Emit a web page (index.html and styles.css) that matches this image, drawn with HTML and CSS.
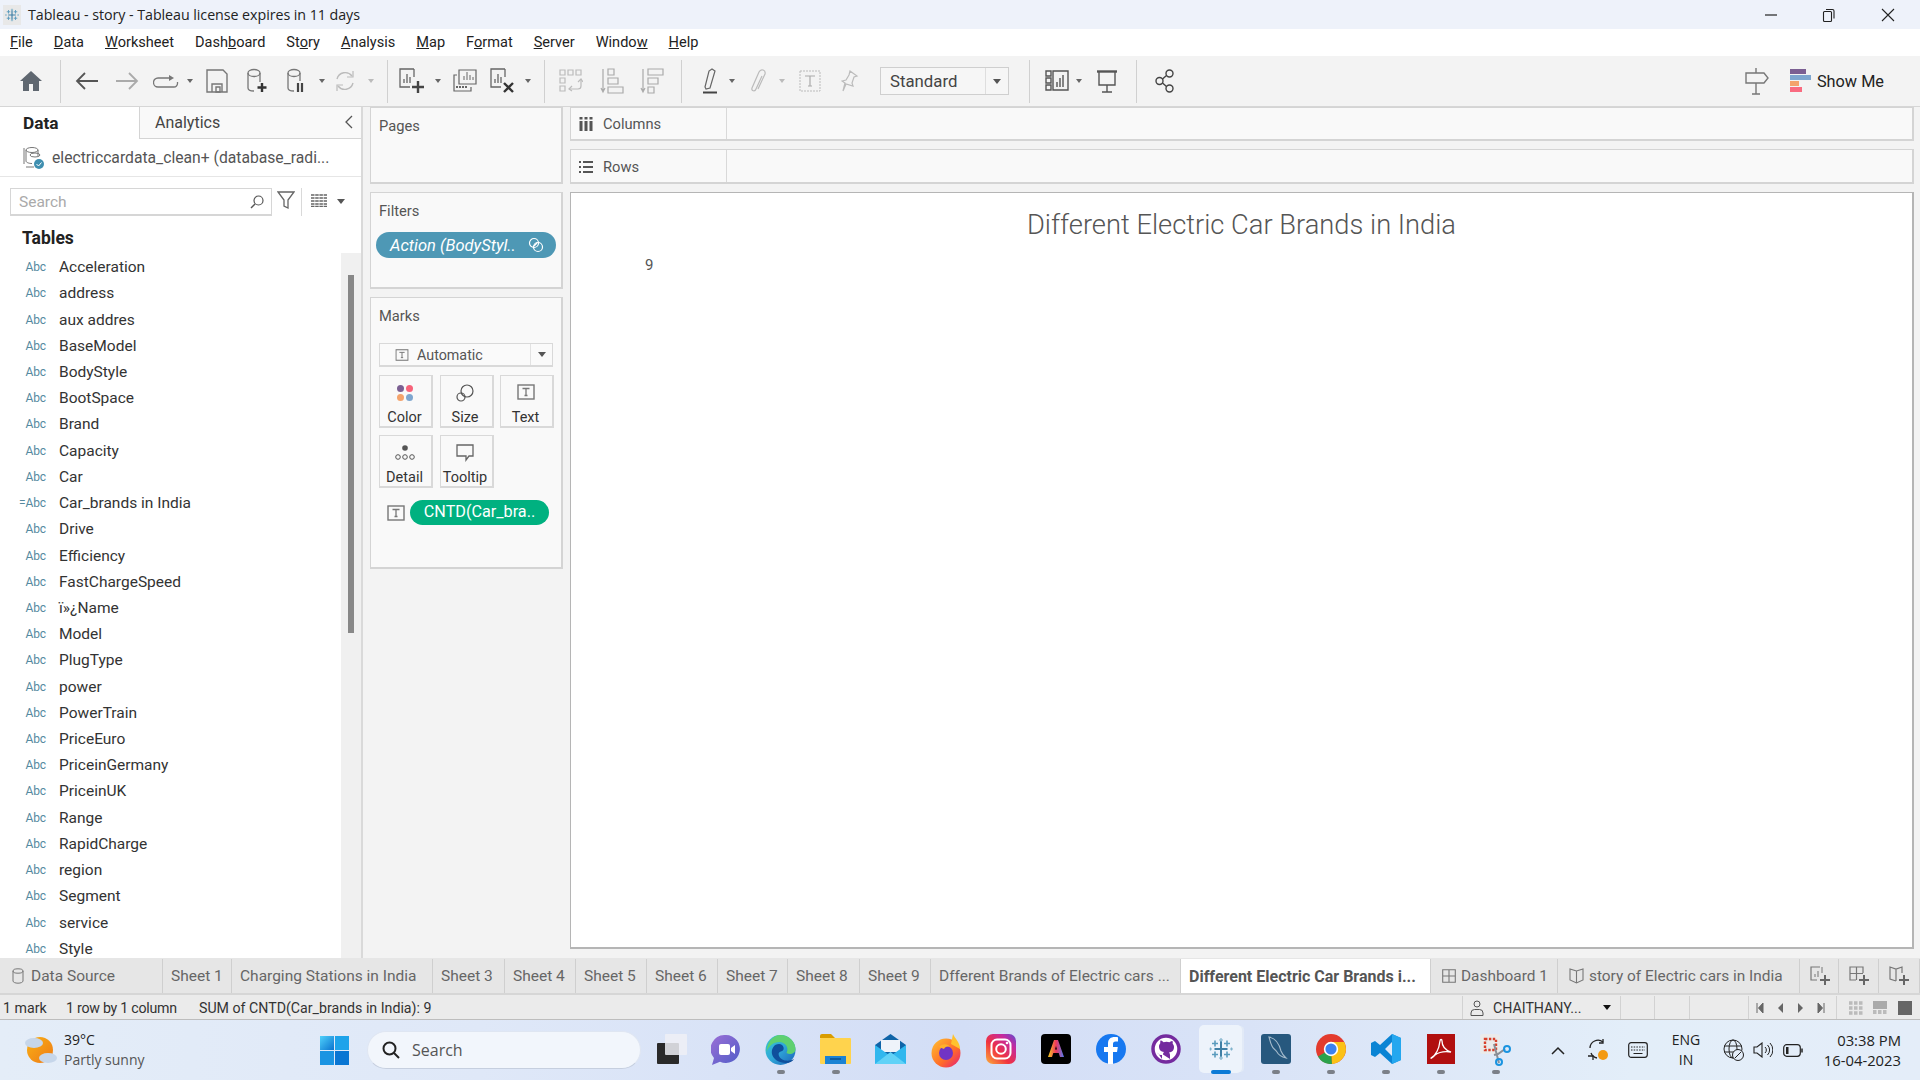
FILE: index.html
```html
<!DOCTYPE html>
<html lang="en">
<head>
<meta charset="utf-8">
<title>Tableau - story</title>
<link rel="stylesheet" href="styles.css">
</head>
<body>
<svg class="defs" width="0" height="0">
  <symbol id="tab-logo" viewBox="0 0 24 24">
    <g stroke="#4e86a8" stroke-width="1.6" fill="none">
      <path d="M12 4v16M5.5 12h13" stroke-width="2" stroke="#3f7fa5"/>
      <path d="M6 3.5v6M3 6.5h6M18 3.5v6M15 6.5h6M6 14.500v6M3 17.500h6M18 14.500v6M15 17.500h6" stroke="#5a9bbd"/>
      <path d="M12 1v4M10 3h4M12 19v4M10 21h4M1.500 10.500v3M.5 12h2.500M22.500 10.500v3M21 12h3" stroke="#7fb2cc" stroke-width="1.200"/>
    </g>
  </symbol>
  <symbol id="i-t" viewBox="0 0 18 16">
    <rect x="1" y="1" width="16" height="14" fill="none" stroke="#777" stroke-width="1.400"/>
    <path d="M5.500 4.500h7M9 4.500v7M7.500 11.500h3" stroke="#777" stroke-width="1.300" fill="none"/>
  </symbol>
  <symbol id="i-chart" viewBox="0 0 22 22">
    <path d="M15 1H1v18h10" fill="none" stroke="#666" stroke-width="1.300"/>
    <path d="M15 1v8" fill="none" stroke="#666" stroke-width="1.300"/>
    <path d="M5 15v-4M8 15V6M11 15V9" stroke="#666" stroke-width="1.300"/>
  </symbol>
</svg>

<header class="titlebar">
  <svg class="app-tile" width="18" height="20" viewBox="0 0 18 20"><rect width="18" height="20" fill="#e8e8e8"/><use href="#tab-logo" x="2" y="3" width="14" height="14"/></svg>
  <span class="title-text">Tableau - story - Tableau license expires in 11 days</span>
  <div class="win-controls">
    <svg width="14" height="14" viewBox="0 0 14 14"><path d="M1 7h12" stroke="#222" stroke-width="1.200"/></svg>
    <svg width="14" height="16" viewBox="0 0 14 16"><path d="M1.500 5.500a1 1 0 0 1 1-1h6a1 1 0 0 1 1 1v8a1 1 0 0 1-1 1h-6a1 1 0 0 1-1-1zM4 2.500h6.500a1.500 1.500 0 0 1 1.500 1.500v7.500" fill="none" stroke="#222" stroke-width="1.100"/></svg>
    <svg width="14" height="14" viewBox="0 0 14 14"><path d="M1 1l12 12M13 1L1 13" stroke="#222" stroke-width="1.100"/></svg>
  </div>
</header>

<nav class="menubar">
  <span><u>F</u>ile</span><span><u>D</u>ata</span><span><u>W</u>orksheet</span><span>Dash<u>b</u>oard</span><span>St<u>o</u>ry</span><span><u>A</u>nalysis</span><span><u>M</u>ap</span><span>F<u>o</u>rmat</span><span><u>S</u>erver</span><span>Windo<u>w</u></span><span><u>H</u>elp</span>
</nav>

<div class="toolbar">
  <div class="tool w40 first"><svg width="24" height="22" viewBox="0 0 24 22"><path d="M12 1L1 11h3v10h6v-7h4v7h6V11h3z" fill="#5f6770"/></svg></div>
  <div class="tool w18"><i class="vsep"></i></div>
  <div class="tool w36"><svg width="24" height="20" viewBox="0 0 24 20"><path d="M23 10H2M10 2l-8 8 8 8" fill="none" stroke="#555" stroke-width="1.800"/></svg></div>
  <div class="tool w44"><svg width="24" height="20" viewBox="0 0 24 20"><path d="M1 10h21M14 2l8 8-8 8" fill="none" stroke="#aaa" stroke-width="1.800"/></svg></div>
  <div class="tool w34"><svg width="26" height="14" viewBox="0 0 26 14"><path d="M17 4H5a3.500 3.500 0 0 0 0 9h16a3.500 3.500 0 0 0 3.500-3.500V8" fill="none" stroke="#777" stroke-width="1.300"/><path d="M16 1l5 3-5 3z" fill="#777"/></svg></div>
  <div class="tool w14"><i class="dd"></i></div>
  <div class="tool w40"><svg width="22" height="24" viewBox="0 0 22 24"><path d="M1 1h16l4 4v18H1z" fill="none" stroke="#777" stroke-width="1.400"/><path d="M6 23v-8h10v8M10 18h4v5h-4z" fill="none" stroke="#777" stroke-width="1.400"/></svg></div>
  <div class="tool w40"><svg width="22" height="26" viewBox="0 0 22 26"><ellipse cx="8" cy="5" rx="6" ry="3.500" fill="none" stroke="#777" stroke-width="1.300"/><path d="M2 5v15c0 2 2 3 6 3M14 5v9" fill="none" stroke="#777" stroke-width="1.300"/><path d="M16 15v9M11.500 19.500h9" stroke="#333" stroke-width="2.400"/></svg></div>
  <div class="tool w38"><svg width="20" height="26" viewBox="0 0 20 26"><ellipse cx="8" cy="5" rx="6" ry="3.500" fill="none" stroke="#777" stroke-width="1.300"/><path d="M2 5v15c0 2 2 3 6 3M14 5v8" fill="none" stroke="#777" stroke-width="1.300"/><path d="M12 15v9M16 15v9" stroke="#444" stroke-width="2.200"/></svg></div>
  <div class="tool w13"><i class="dd"></i></div>
  <div class="tool w34"><svg width="22" height="22" viewBox="0 0 22 22"><path d="M3 9a8.500 8.500 0 0 1 15-3M19 13a8.500 8.500 0 0 1-15 3" fill="none" stroke="#bbb" stroke-width="1.400"/><path d="M19 1v6h-6M3 21v-6h6" fill="none" stroke="#bbb" stroke-width="1.200"/></svg></div>
  <div class="tool w18"><i class="dd off"></i></div>
  <div class="tool w14"><i class="vsep"></i></div>
  <div class="tool w36"><svg width="26" height="26" viewBox="0 0 26 26"><use href="#i-chart" width="22" height="22"/><path d="M19 13v12M13 19h12" stroke="#444" stroke-width="2.400"/></svg></div>
  <div class="tool w16"><i class="dd"></i></div>
  <div class="tool w38"><svg width="24" height="24" viewBox="0 0 24 24"><path d="M6 1h17v14H6z" fill="none" stroke="#666" stroke-width="1.200"/><path d="M11 11V7M14 11V3M17 11V6M20 11V8" stroke="#666"/><path d="M4 6H1v16h17v-4" fill="none" stroke="#666" stroke-width="1.200"/><path d="M3 18h12" stroke="#666" stroke-width="2" stroke-dasharray="2 1"/></svg></div>
  <div class="tool w38"><svg width="26" height="26" viewBox="0 0 26 26"><use href="#i-chart" width="22" height="22"/><path d="M14 15l9 9M23 15l-9 9" stroke="#333" stroke-width="2.400"/></svg></div>
  <div class="tool w12"><i class="dd"></i></div>
  <div class="tool w20"><i class="vsep"></i></div>
  <div class="tool w34"><svg width="24" height="24" viewBox="0 0 24 24"><g fill="none" stroke="#bbb" stroke-width="1.200"><path d="M1 1h5v5H1zM9 1h5v5H9zM17 1h5v5h-5zM1 9h5v5H1zM1 17h5v5H1zM10 20h9a3 3 0 0 0 3-3v-6"/><path d="M19 13l3-3 2 3M13 17l-3 3 3 2"/></g></svg></div>
  <div class="tool w48"><svg width="24" height="26" viewBox="0 0 24 26"><g fill="none" stroke="#aaa" stroke-width="1.200"><path d="M3 1v22M1 20l2 4 2-4M8 1h6v6H8zM8 10h10v6H8zM8 19h15v6H8z"/></g></svg></div>
  <div class="tool w32"><svg width="24" height="26" viewBox="0 0 24 26"><g fill="none" stroke="#aaa" stroke-width="1.200"><path d="M3 1v22M1 20l2 4 2-4M8 1h15v6H8zM8 10h10v6H8zM8 19h6v6H8z"/></g></svg></div>
  <div class="tool w26"><i class="vsep"></i></div>
  <div class="tool w32"><svg width="16" height="26" viewBox="0 0 16 26"><path d="M3 19L7 3l3-2 3 2-5 17-4 1z" fill="none" stroke="#666" stroke-width="1.200"/><path d="M1 24.500h14" stroke="#444" stroke-width="2"/></svg></div>
  <div class="tool w12"><i class="dd"></i></div>
  <div class="tool w40"><svg width="16" height="26" viewBox="0 0 16 26"><path d="M12 8L6 21c-1 3-5 2-4-1L9 4c2-4 7-2 6 2L8 21" fill="none" stroke="#bbb" stroke-width="1.200"/></svg></div>
  <div class="tool w8"><i class="dd off"></i></div>
  <div class="tool w48"><svg width="22" height="22" viewBox="0 0 22 22"><rect x="1" y="1" width="20" height="20" fill="none" stroke="#bbb" stroke-dasharray="2 1"/><path d="M6 6h10M11 6v10M9 16h4" fill="none" stroke="#aaa" stroke-width="1.200"/></svg></div>
  <div class="tool w32"><svg width="18" height="24" viewBox="0 0 18 24"><path d="M9 2l7 5-3 1-2 6 1 3-7-2-3 7 2-8-3-2 4-1 3-5z" fill="none" stroke="#bbb" stroke-width="1.200"/></svg></div>
  <div class="std-select"><span class="std-label">Standard</span><span class="std-arrow"><i class="dd dark"></i></span></div>
  <div class="tool w30"><i class="vsep"></i></div>
  <div class="tool w26"><svg width="24" height="22" viewBox="0 0 24 22"><g fill="none" stroke="#555" stroke-width="1.400"><path d="M1 1h5v5H1zM1 8h5v5H1zM1 15h5v5H1zM8 1h15v19H8z"/><path d="M12 17v-5M15 17V8M18 17V5"/></g></svg></div>
  <div class="tool w18"><i class="dd"></i></div>
  <div class="tool w38"><svg width="22" height="24" viewBox="0 0 22 24"><path d="M1 2.500h20" stroke="#555" stroke-width="2.400"/><path d="M3 3v13h16V3M11 16v7M6 23h10" fill="none" stroke="#555" stroke-width="1.400"/></svg></div>
  <div class="tool w20"><i class="vsep"></i></div>
  <div class="tool w38"><svg width="20" height="24" viewBox="0 0 20 24"><g fill="none" stroke="#444" stroke-width="1.400"><circle cx="4.500" cy="12" r="3.500"/><circle cx="14.500" cy="4.500" r="3.500"/><circle cx="14.500" cy="19.500" r="3.500"/><path d="M7.500 10l4-3.500M7.500 14l4 3.500"/></g></svg></div>
  <div class="toolbar-right">
    <svg width="24" height="28" viewBox="0 0 24 28"><path d="M1 6h18l4 5-4 5H1zM11 16v11M7 27h8M11 1v5" fill="none" stroke="#777" stroke-width="1.400"/></svg>
    <div class="showme"><svg width="21" height="24" viewBox="0 0 21 24"><rect width="16" height="5" fill="#7b5f92"/><rect y="6" width="21" height="5" fill="#7ea6cf"/><rect y="12" width="9" height="5" fill="#f4a36c"/><rect y="18" width="12" height="5" fill="#f96b80"/></svg><span>Show Me</span></div>
  </div>
</div>

<main class="workspace">
  <aside class="data-pane">
    <div class="pane-tabs">
      <div class="pane-tab active">Data</div>
      <div class="pane-tab">Analytics<svg class="collapse" width="8" height="14" viewBox="0 0 8 14"><path d="M7 1L1 7l6 6" fill="none" stroke="#555" stroke-width="1.300"/></svg></div>
    </div>
    <div class="source-row">
      <svg width="22" height="24" viewBox="0 0 22 24"><g fill="none" stroke="#777"><ellipse cx="9" cy="4" rx="6" ry="2.500"/><path d="M3 4v11c0 1.500 3 2.500 6 2.500M15 4v6M1 2v16M3 21h8"/><ellipse cx="12" cy="9" rx="5" ry="2"/></g><circle cx="16" cy="18" r="5" fill="#3f8fb0"/><path d="M13.500 18l2 2 3-3.500" stroke="#fff" fill="none"/></svg>
      <span>electriccardata_clean+ (database_radi...</span>
    </div>
    <div class="search-row">
      <div class="search-box"><span>Search</span><svg width="14" height="14" viewBox="0 0 14 14"><circle cx="8.500" cy="5.500" r="4.500" fill="none" stroke="#555" stroke-width="1.200"/><path d="M5 9l-4 4" stroke="#555" stroke-width="1.400"/></svg></div>
      <svg class="funnel" width="18" height="20" viewBox="0 0 18 20"><path d="M1 2h16l-6 8v8l-4-2v-6z" fill="none" stroke="#666" stroke-width="1.300"/></svg>
      <i class="search-sep"></i>
      <svg class="listview" width="16" height="13" viewBox="0 0 16 13"><path d="M0 1h16M0 4h16M0 7h16M0 10h16M0 12.500h16" stroke="#666" stroke-width="1.500" stroke-dasharray="3.500 .7"/></svg>
      <i class="dd dark search-dd"></i>
    </div>
    <h2 class="tables-head">Tables</h2>
    <div class="field-area">
      <ul class="fields">
        <li><b>Abc</b>Acceleration</li>
        <li><b>Abc</b>address</li>
        <li><b>Abc</b>aux addres</li>
        <li><b>Abc</b>BaseModel</li>
        <li><b>Abc</b>BodyStyle</li>
        <li><b>Abc</b>BootSpace</li>
        <li><b>Abc</b>Brand</li>
        <li><b>Abc</b>Capacity</li>
        <li><b>Abc</b>Car</li>
        <li><b>=Abc</b>Car_brands in India</li>
        <li><b>Abc</b>Drive</li>
        <li><b>Abc</b>Efficiency</li>
        <li><b>Abc</b>FastChargeSpeed</li>
        <li><b>Abc</b>ï»¿Name</li>
        <li><b>Abc</b>Model</li>
        <li><b>Abc</b>PlugType</li>
        <li><b>Abc</b>power</li>
        <li><b>Abc</b>PowerTrain</li>
        <li><b>Abc</b>PriceEuro</li>
        <li><b>Abc</b>PriceinGermany</li>
        <li><b>Abc</b>PriceinUK</li>
        <li><b>Abc</b>Range</li>
        <li><b>Abc</b>RapidCharge</li>
        <li><b>Abc</b>region</li>
        <li><b>Abc</b>Segment</li>
        <li><b>Abc</b>service</li>
        <li><b>Abc</b>Style</li>
      </ul>
      <div class="scroll-track"><div class="scroll-thumb"></div></div>
    </div>
  </aside>

  <section class="cards">
    <div class="card pages"><div class="card-label">Pages</div></div>
    <div class="card filters">
      <div class="card-label">Filters</div>
      <div class="pill-filter"><span>Action (BodyStyl..</span><svg width="16" height="16" viewBox="0 0 16 16"><g fill="none" stroke="#fff" stroke-width="1.200"><circle cx="6" cy="6" r="4.500"/><circle cx="10" cy="10" r="4.500"/><path d="M6 9l3-3"/></g></svg></div>
    </div>
    <div class="card marks">
      <div class="card-label">Marks</div>
      <div class="marks-select"><div class="marks-type"><svg width="14" height="12" viewBox="0 0 18 16"><use href="#i-t" width="18" height="16"/></svg><span>Automatic</span></div><span class="marks-arrow"><i class="dd dark"></i></span></div>
      <div class="mark-grid">
        <div class="mark-btn"><svg width="18" height="18" viewBox="0 0 18 18"><circle cx="4.500" cy="4.500" r="3.500" fill="#7b5f92"/><circle cx="13.500" cy="4.500" r="3.500" fill="#f7637a"/><circle cx="4.500" cy="13.500" r="3.500" fill="#f4a36c"/><circle cx="13.500" cy="13.500" r="3.500" fill="#7ea6cf"/></svg><span>Color</span></div>
        <div class="mark-btn"><svg width="18" height="18" viewBox="0 0 18 18"><g fill="none" stroke="#555" stroke-width="1.200"><circle cx="11" cy="7" r="6"/><circle cx="5" cy="13" r="4"/></g></svg><span>Size</span></div>
        <div class="mark-btn"><svg width="18" height="16" viewBox="0 0 18 16"><use href="#i-t" width="18" height="16"/></svg><span>Text</span></div>
        <div class="mark-btn"><svg width="20" height="18" viewBox="0 0 20 18"><circle cx="10" cy="4" r="2.800" fill="#555"/><g fill="none" stroke="#555"><circle cx="3" cy="13" r="2.300"/><circle cx="10" cy="13" r="2.300"/><circle cx="17" cy="13" r="2.300"/></g></svg><span>Detail</span></div>
        <div class="mark-btn"><svg width="18" height="18" viewBox="0 0 18 18"><path d="M1 1h16v11h-4l-3 4v-4H1z" fill="none" stroke="#666" stroke-width="1.300"/></svg><span>Tooltip</span></div>
      </div>
      <div class="mark-pill-row"><svg width="18" height="16" viewBox="0 0 18 16"><use href="#i-t" width="18" height="16"/></svg><div class="pill-measure">CNTD(Car_bra..</div></div>
    </div>
  </section>

  <section class="canvas">
    <div class="shelf"><div class="shelf-label"><svg width="14" height="14" viewBox="0 0 14 14"><path d="M2 4v10M7 4v10M12 4v10" stroke="#555" stroke-width="3"/><path d="M2 0v2.500M7 0v2.500M12 0v2.500" stroke="#555" stroke-width="3"/></svg><span>Columns</span></div></div>
    <div class="shelf"><div class="shelf-label"><svg width="14" height="14" viewBox="0 0 14 14"><path d="M0 2h2M4 2h10M0 7h2M4 7h10M0 12h2M4 12h10" stroke="#555" stroke-width="2"/></svg><span>Rows</span></div></div>
    <div class="view">
      <h1 class="view-title">Different Electric Car Brands in India</h1>
      <div class="view-value">9</div>
    </div>
  </section>
</main>

<div class="tabs">
  <div class="tab src"><svg width="12" height="16" viewBox="0 0 12 16"><ellipse cx="6" cy="3" rx="5" ry="2.200" fill="none" stroke="#777"/><path d="M1 3v10c0 1.200 2.200 2.200 5 2.200s5-1 5-2.200V3" fill="none" stroke="#777"/></svg>Data Source</div>
  <div class="tab">Sheet 1</div>
  <div class="tab">Charging Stations in India</div>
  <div class="tab">Sheet 3</div>
  <div class="tab">Sheet 4</div>
  <div class="tab">Sheet 5</div>
  <div class="tab">Sheet 6</div>
  <div class="tab">Sheet 7</div>
  <div class="tab">Sheet 8</div>
  <div class="tab">Sheet 9</div>
  <div class="tab">Dfferent Brands of Electric cars ...</div>
  <div class="tab current">Different Electric Car Brands i...</div>
  <div class="tab icon-tab"><svg width="14" height="14" viewBox="0 0 14 14"><path d="M.7.7h12.600v12.600H.7zM7 .7v12.600M.7 7h12.600" fill="none" stroke="#777" stroke-width="1.100"/></svg>Dashboard 1</div>
  <div class="tab icon-tab"><svg width="15" height="16" viewBox="0 0 15 16"><path d="M7.500 3L1 1v11l6.500 3 6.500-3V1zM7.500 3v12" fill="none" stroke="#777" stroke-width="1.100"/></svg>story of Electric cars in India</div>
  <div class="tab add"><svg width="20" height="20" viewBox="0 0 20 20"><path d="M10 1H1v13h6" fill="none" stroke="#777" stroke-width="1.200"/><path d="M12 1v6M5 11V8M8 11V5" stroke="#777"/><path d="M15 9v10M10 14h10" stroke="#666" stroke-width="2"/></svg></div>
  <div class="tab add"><svg width="20" height="20" viewBox="0 0 20 20"><path d="M7 14H1V1h13v6M7.500 1v13M1 7.500h13" fill="none" stroke="#777" stroke-width="1.200"/><path d="M15 9v10M10 14h10" stroke="#666" stroke-width="2"/></svg></div>
  <div class="tab add"><svg width="20" height="20" viewBox="0 0 20 20"><path d="M7 15L1 13V1l6 2 6-2v6M7 3v12" fill="none" stroke="#777" stroke-width="1.200"/><path d="M15 9v10M10 14h10" stroke="#666" stroke-width="2"/></svg></div>
</div>

<div class="status">
  <span class="st-a">1 mark</span><span class="st-b">1 row by 1 column</span><span class="st-c">SUM of CNTD(Car_brands in India): 9</span>
  <div class="st-user"><svg width="14" height="16" viewBox="0 0 14 16"><circle cx="7" cy="4" r="3" fill="none" stroke="#555"/><path d="M1 15.500v-2.500a3.500 3.500 0 0 1 3.500-3.500h5A3.500 3.500 0 0 1 13 13v2.500z" fill="none" stroke="#555"/></svg><span>CHAITHANY...</span><i class="dd black"></i></div>
  <div class="st-cell w34"></div><div class="st-cell w35"></div><div class="st-cell w59"></div>
  <div class="st-nav">
    <svg width="8" height="10" viewBox="0 0 8 10"><path d="M1 0v10M7 0v10L2.500 5z" stroke="#666" fill="#666"/></svg>
    <svg width="6" height="10" viewBox="0 0 6 10"><path d="M5 0v10L0 5z" fill="#666"/></svg>
    <svg width="6" height="10" viewBox="0 0 6 10"><path d="M1 0v10l5-5z" fill="#666"/></svg>
    <svg width="8" height="10" viewBox="0 0 8 10"><path d="M7 0v10M1 0v10L5.500 5z" stroke="#666" fill="#666"/></svg>
  </div>
  <div class="st-views">
    <svg width="14" height="14" viewBox="0 0 14 14"><path d="M0 2h14M0 7h14M0 12h14" stroke="#bbb" stroke-width="3.500" stroke-dasharray="3.500 1.500"/></svg>
    <svg width="14" height="14" viewBox="0 0 14 14"><rect width="14" height="8" fill="#aaa"/><path d="M0 11h14" stroke="#bbb" stroke-width="4" stroke-dasharray="3.500 1.500"/></svg>
    <svg width="14" height="14" viewBox="0 0 14 14"><rect width="14" height="14" fill="#666"/></svg>
  </div>
</div>

<footer class="taskbar">
  <div class="weather">
    <svg width="32" height="32" viewBox="0 0 32 32"><defs><linearGradient id="sun" x1="0" y1="0" x2="1" y2="1"><stop offset="0" stop-color="#f9b115"/><stop offset="1" stop-color="#ee7a17"/></linearGradient></defs><circle cx="15" cy="16" r="13" fill="url(#sun)"/><ellipse cx="9" cy="9" rx="9" ry="5" fill="#c6d6ea"/><ellipse cx="23" cy="24" rx="9" ry="5" fill="#c6d6ea"/></svg>
    <div class="weather-text"><span class="temp">39°C</span><span class="sky">Partly sunny</span></div>
  </div>
  <svg class="winlogo" width="29" height="29" viewBox="0 0 29 29"><defs><linearGradient id="w1" x1="0" y1="0" x2="1" y2="1"><stop offset="0" stop-color="#4fd1fb"/><stop offset="1" stop-color="#0a73cf"/></linearGradient></defs><rect width="14" height="14" fill="url(#w1)"/><rect x="15" width="14" height="14" fill="#1ea3ea"/><rect y="15" width="14" height="14" fill="#1b94e2"/><rect x="15" y="15" width="14" height="14" fill="#0a76d3"/></svg>
  <div class="task-search"><svg width="18" height="18" viewBox="0 0 18 18"><circle cx="7.500" cy="7.500" r="6" fill="none" stroke="#222" stroke-width="2"/><path d="M12 12l5 5" stroke="#222" stroke-width="2"/></svg><span>Search</span></div>
  <div class="apps">
    <div class="app first"><svg width="30" height="30" viewBox="0 0 30 30"><rect y="9" width="22" height="21" rx="1" fill="#2a2a2a"/><rect x="8" width="22" height="21" rx="1" fill="#eef0f6" opacity=".85"/></svg></div>
    <div class="app"><svg width="30" height="32" viewBox="0 0 30 32"><defs><linearGradient id="chat" x1="0" y1="0" x2="1" y2="1"><stop offset="0" stop-color="#9c6fd6"/><stop offset="1" stop-color="#4f5dc8"/></linearGradient></defs><path d="M15 1a14 14 0 1 1-6 26.700L1 31l2-7A14 14 0 0 1 15 1z" fill="url(#chat)"/><rect x="8" y="10" width="11" height="11" rx="2" fill="#fff"/><path d="M20 14l4-3v9l-4-3z" fill="#fff"/></svg></div>
    <div class="app dot"><svg width="31" height="32" viewBox="0 0 31 32"><defs><linearGradient id="edge" x1="0" y1="0" x2="1" y2="1"><stop offset="0" stop-color="#37c6d0"/><stop offset=".5" stop-color="#2fa7d8"/><stop offset="1" stop-color="#1b5fb8"/></linearGradient></defs><circle cx="15.500" cy="16" r="15" fill="url(#edge)"/><path d="M15.500 1A15 15 0 0 1 30.500 15c0 5-6 6-9 4 3-6-2-11-7-11-6 0-11 4-13 10C2 8 8 1 15.500 1z" fill="#5ed070"/><path d="M14 10c-5 0-8 5-7 10s7 9 14 9c4 0 7-2 8-4-5 3-13 2-15-3-1-3 0-4 3-5 3-1 2-7-3-7z" fill="#0f4f9c"/></svg></div>
    <div class="app dot"><svg width="31" height="30" viewBox="0 0 31 30"><path d="M0 2a2 2 0 0 1 2-2h9l4 4H0z" fill="#d99c00"/><rect y="4" width="31" height="26" rx="1" fill="#ffd34d"/><rect x="5" y="22" width="21" height="8" fill="#1b83d4"/><path d="M10 25h11" stroke="#0c4f8d" stroke-width="1.500"/></svg></div>
    <div class="app"><svg width="31" height="30" viewBox="0 0 31 30"><path d="M15.500 0L31 11v19H0V11z" fill="#0f64a8"/><path d="M6 6h19v12H6z" fill="#eef3fa"/><path d="M0 11l15.500 11L31 11v19H0z" fill="#30b7ee"/><path d="M0 30l15.500-12L31 30z" fill="#61d2f7"/></svg></div>
    <div class="app"><svg width="30" height="34" viewBox="0 0 30 34"><defs><linearGradient id="fx" x1="0" y1="0" x2="1" y2="1"><stop offset="0" stop-color="#ffc22e"/><stop offset=".6" stop-color="#ff6a2a"/><stop offset="1" stop-color="#e3197d"/></linearGradient></defs><circle cx="15" cy="19" r="14.500" fill="url(#fx)"/><path d="M22 0c2 5 7 8 7 15L20 10z" fill="#ffc22e"/><circle cx="15" cy="19" r="7" fill="#7134c4"/><path d="M8 13c4-4 9-3 11 0-3-1-5 0-6 2z" fill="#ffb12a"/></svg></div>
    <div class="app"><svg width="30" height="30" viewBox="0 0 30 30"><defs><linearGradient id="ig" x1="0" y1="1" x2="1" y2="0"><stop offset="0" stop-color="#fcb03a"/><stop offset=".4" stop-color="#f0323f"/><stop offset=".75" stop-color="#c52a9f"/><stop offset="1" stop-color="#5b4fd0"/></linearGradient></defs><rect width="30" height="30" rx="7" fill="url(#ig)"/><rect x="5.500" y="5.500" width="19" height="19" rx="5.500" fill="none" stroke="#fff" stroke-width="2"/><circle cx="15" cy="15" r="4.800" fill="none" stroke="#fff" stroke-width="2"/><circle cx="21" cy="9" r="1.300" fill="#fff"/></svg></div>
    <div class="app"><svg width="30" height="30" viewBox="0 0 30 30"><defs><linearGradient id="ad" x1="0" y1="0" x2="1" y2="0"><stop offset="0" stop-color="#f5d020"/><stop offset=".5" stop-color="#f0365c"/><stop offset="1" stop-color="#4f7cf5"/></linearGradient></defs><rect width="30" height="30" rx="4" fill="#000"/><path d="M13 6h4l6 17h-4l-1.300-4h-5.400L11 23H7zM14 15.500h2L15 12z" fill="url(#ad)" fill-rule="evenodd"/></svg></div>
    <div class="app"><svg width="30" height="30" viewBox="0 0 30 30"><circle cx="15" cy="15" r="15" fill="#1778f0"/><path d="M17 30V18h4l.8-5H17v-3c0-1.500.7-2.500 2.500-2.500H22V3.300C21 3.100 19.800 3 18.500 3 15 3 12 5 12 9.500V13H8v5h4v12z" fill="#fff"/></svg></div>
    <div class="app"><svg width="30" height="30" viewBox="0 0 30 30"><circle cx="15" cy="15" r="13" fill="#fff" stroke="#742b9e" stroke-width="3.500"/><path d="M11 25v-4c-3 .5-4-1-4.500-2.500M19 25v-4c0-1-.5-2-1-2.500 3-.5 5-2 5-5.500 0-1.500-.5-2.500-1.300-3.300.2-1 .1-2-.2-2.700-1 0-2 .5-3 1.200a10 10 0 0 0-6 0C11.500 7 10.500 6.500 9.500 6.500c-.3.700-.4 1.700-.2 2.700C8.500 10 8 11 8 12.500c0 3.500 2 5 5 5.500-.5.500-1 1.500-1 2.500" fill="#742b9e"/></svg></div>
    <div class="app active"><div class="app-tile-lg"><svg width="24" height="24" viewBox="0 0 24 24"><use href="#tab-logo" width="24" height="24"/></svg></div><i class="bar"></i></div>
    <div class="app dot"><svg width="30" height="30" viewBox="0 0 30 30"><rect width="30" height="30" rx="3" fill="#27587e"/><path d="M8 3c6 1 10 6 12 14 1 3 3 5 5 7-4-1-7-2-9-6-2-3-4-3-5-6-1-2-2-5-3-9z" fill="none" stroke="#a4bacb" stroke-width="1.100"/></svg></div>
    <div class="app dot"><svg width="30" height="30" viewBox="0 0 30 30"><circle cx="15" cy="15" r="15" fill="#e33b2e"/><path d="M15 15l-13 7.500A15 15 0 0 0 16 30z" fill="#2ba24c"/><path d="M15 8h13.200A15 15 0 0 1 16 30z" fill="#fbc116"/><circle cx="15" cy="15" r="7.200" fill="#fff"/><circle cx="15" cy="15" r="5.600" fill="#3c81f0"/></svg></div>
    <div class="app dot"><svg width="30" height="30" viewBox="0 0 30 30"><path d="M21 0l9 4v22l-9 4-12-11-5 4-4-2V9l4-2 5 4zM21 8l-7 7 7 7z" fill="#0a84d4" fill-rule="evenodd"/><path d="M21 0l9 4v22l-9 4z" fill="#24a7ef"/></svg></div>
    <div class="app dot"><svg width="28" height="30" viewBox="0 0 28 30"><rect width="28" height="30" fill="#b10f0f"/><path d="M4 24c5-3 8-9 9-17 .2-2 2-2 2 0 0 5 3 9 9 11-6-1-12 0-16 3-2 2-4 4-4 3z" fill="none" stroke="#fff" stroke-width="1.300"/></svg></div>
    <div class="app dot"><svg width="32" height="32" viewBox="0 0 32 32"><rect width="20" height="20" rx="3" fill="#ebebeb"/><rect x="5" y="5" width="11" height="11" fill="none" stroke="#d8402b" stroke-width="2.400" stroke-dasharray="2.400 1.500"/><path d="M14 10l5 19M25 15l-7 5-4 1" fill="none" stroke="#8a8f96" stroke-width="2"/><circle cx="27" cy="15" r="3" fill="none" stroke="#1a94e0" stroke-width="2"/><circle cx="19" cy="28" r="3" fill="none" stroke="#1a94e0" stroke-width="2"/></svg></div>
  </div>
  <div class="tray">
    <div class="tray-cell w40"><svg width="14" height="9" viewBox="0 0 14 9"><path d="M1 8l6-6 6 6" fill="none" stroke="#222" stroke-width="1.500"/></svg></div>
    <div class="tray-cell w40"><svg width="22" height="24" viewBox="0 0 22 24"><path d="M3 10a8 8 0 0 1 13-6M4 15a8 8 0 0 0 6 5" fill="none" stroke="#222" stroke-width="1.300"/><path d="M16 1v4h-4M1 18h5v4" fill="none" stroke="#222" stroke-width="1.300"/><circle cx="16" cy="17" r="5" fill="#f39a12"/></svg></div>
    <div class="tray-cell w40"><svg width="20" height="16" viewBox="0 0 20 16"><rect x=".7" y=".7" width="18.600" height="14.600" rx="2.500" fill="none" stroke="#222" stroke-width="1.200"/><path d="M3 5h14M3 8h14" stroke="#222" stroke-dasharray="1.500 1.200"/><path d="M5.500 11.500h9" stroke="#222"/></svg></div>
    <div class="tray-lang">ENG<br>IN</div>
    <div class="tray-cell w38"><svg width="21" height="22" viewBox="0 0 21 22"><g fill="none" stroke="#222"><circle cx="10" cy="10" r="9"/><ellipse cx="10" cy="10" rx="4" ry="9"/><path d="M1 7h18M1 13h18"/></g><circle cx="15" cy="16" r="5.500" fill="#e4edf9" stroke="#222"/><path d="M12 19l6-6" stroke="#222"/></svg></div>
    <div class="tray-cell w22"><svg width="20" height="16" viewBox="0 0 20 16"><path d="M1 5h3l5-4v14l-5-4H1z" fill="none" stroke="#222" stroke-width="1.100"/><path d="M12 5a4 4 0 0 1 0 6M14.500 3a7 7 0 0 1 0 10M17 1a10 10 0 0 1 0 14" fill="none" stroke="#222"/></svg></div>
    <div class="tray-cell w38"><svg width="20" height="13" viewBox="0 0 20 13"><rect x=".7" y=".7" width="16.600" height="11.600" rx="3" fill="none" stroke="#222" stroke-width="1.200"/><rect x="3" y="3" width="2.500" height="7" fill="#222"/><path d="M19 4.500v4" stroke="#222" stroke-width="1.500"/></svg></div>
    <div class="clock">03:38 PM<br>16-04-2023</div>
  </div>
</footer>
</body>
</html>
```
FILE: styles.css
```css
* { box-sizing: border-box; }
html, body { margin: 0; height: 100%; }
body {
  width: 1920px; height: 1080px; overflow: hidden;
  display: flex; flex-direction: column;
  font-family: Roboto, "Liberation Sans", sans-serif;
  color: #333; background: #f3f3f3;
}
.defs { position: absolute; }
i { display: block; font-style: normal; }
svg { display: block; flex: none; }

/* title bar */
.titlebar { height: 29px; background: #eef2fa; display: flex; align-items: center; padding-left: 3px; flex: none; }
.title-text { margin-left: 7px; font-size: 14.250px; color: #222; font-family: "Open Sans", sans-serif; letter-spacing: -.05px; }
.win-controls { margin-left: auto; display: flex; align-items: center; }
.win-controls svg:nth-child(1) { margin-right: 44px; }
.win-controls svg:nth-child(2) { margin-right: 45px; }
.win-controls svg:nth-child(3) { margin-right: 25px; }

/* menu */
.menubar { height: 27px; flex: none; background: #fff; display: flex; align-items: center; gap: 21px; padding-left: 10px; font-size: 14.550px; color: #222; }

/* toolbar */
.toolbar { height: 51px; flex: none; display: flex; align-items: center; background: #f3f3f3; border-bottom: 1px solid #d6d6d6; }
.tool { height: 100%; display: flex; align-items: center; justify-content: center; flex: none; }
.tool.first { margin-left: 11px; }
.w8 { width: 8px; } .w12 { width: 12px; } .w13 { width: 13px; } .w14 { width: 14px; } .w16 { width: 16px; } .w18 { width: 18px; }
.w20 { width: 20px; } .w26 { width: 26px; } .w30 { width: 30px; } .w32 { width: 32px; } .w34 { width: 34px; }
.w35 { width: 35px; } .w36 { width: 36px; } .w38 { width: 38px; } .w40 { width: 40px; } .w44 { width: 44px; }
.w48 { width: 48px; } .w59 { width: 59px; } .w22 { width: 22px; }
.vsep { width: 1px; height: 43px; background: #d0d0d0; }
.dd { width: 0; height: 0; border-left: 3.500px solid transparent; border-right: 3.500px solid transparent; border-top: 4px solid #666; }
.dd.off { border-top-color: #bbb; }
.dd.dark { border-left-width: 4.500px; border-right-width: 4.500px; border-top: 5px solid #555; }
.dd.black { border-left-width: 4.500px; border-right-width: 4.500px; border-top: 5px solid #111; }
.std-select { width: 129px; height: 28px; margin-left: 14px; margin-right: 5px; display: flex; border: 1px solid #cfcfcf; background: #f6f6f6; flex: none; }
.std-label { flex: 1; padding-left: 9px; font-size: 16.800px; line-height: 26px; color: #444; }
.std-arrow { width: 23px; border-left: 1px solid #dedede; display: flex; align-items: center; justify-content: center; }
.toolbar-right { margin-left: auto; display: flex; align-items: center; padding-right: 36px; }
.toolbar-right > svg { margin-right: 21px; }
.showme { display: flex; align-items: center; gap: 6px; font-size: 16.300px; color: #222; }

/* workspace */
.workspace { flex: 1; min-height: 0; display: flex; }
.data-pane { width: 363px; flex: none; background: #fff; border-right: 2px solid #d9d9d9; display: flex; flex-direction: column; }
.pane-tabs { display: flex; height: 32px; flex: none; }
.pane-tab { height: 32px; font-size: 16px; line-height: 32px; color: #444; flex: 1; padding-left: 15px; background: #f9f9f9; border-left: 1px solid #d4d4d4; border-bottom: 1px solid #d4d4d4; display: flex; justify-content: space-between; }
.pane-tab.active { flex: none; width: 139px; background: #fff; border: 0; padding-left: 23px; font-weight: 700; font-size: 17.300px; color: #222; }
.collapse { margin: 8px 8px 0 0; }
.source-row { height: 38px; flex: none; border-bottom: 1px solid #e6e6e6; display: flex; align-items: center; padding: 0 0 0 23px; gap: 7px; font-size: 15.700px; color: #555; }
.search-row { height: 39px; flex: none; padding: 11px 0 0 10px; display: flex; align-items: flex-start; }
.search-box { width: 262px; height: 28px; border: 1px solid #d6d6d6; border-bottom-width: 2px; display: flex; align-items: center; justify-content: space-between; padding: 0 7px 0 8px; font-size: 15.500px; color: #aaa; }
.funnel { margin: 2px 0 0 5px; }
.search-sep { width: 1px; height: 28px; background: #d9d9d9; margin: 0 0 0 6px; }
.listview { margin: 6px 0 0 9px; }
.search-dd { margin: 11px 0 0 10px; }
.tables-head { margin: 0; height: 37px; flex: none; font-size: 17.500px; line-height: 28px; padding-top: 8px; font-weight: 700; padding-left: 22px; color: #222; }
.field-area { flex: 1; min-height: 0; display: flex; overflow: hidden; }
.fields { list-style: none; margin: 0; padding: 1px 0 0; flex: 1; overflow: hidden; }
.fields li { height: 26.230px; display: flex; align-items: center; font-size: 15.500px; color: #333; white-space: nowrap; }
.fields b { width: 47px; padding-right: 1px; margin-right: 12px; text-align: right; font-weight: 400; font-size: 12px; color: #55899f; flex: none; letter-spacing: -.1px; }
.scroll-track { width: 20px; flex: none; background: #f0f0f0; padding: 22px 0 0 7px; }
.scroll-thumb { width: 6px; height: 358px; background: #888; }

/* cards */
.cards { width: 193px; margin-left: 7px; flex: none; display: flex; flex-direction: column; gap: 8px; }
.card { background: #f9f9f9; border: 1px solid #d4d4d4; border-bottom-width: 2px; border-right-width: 2px; }
.card-label { padding: 10px 0 0 8px; font-size: 14.700px; line-height: 16px; color: #555; }
.pages { height: 77px; }
.filters { height: 97px; }
.marks { height: 272px; }
.pill-filter { margin: 13px 0 0 5px; width: 180px; height: 26px; border-radius: 13px; background: #4e98b5; color: #fff; font-style: italic; font-size: 16.500px; display: flex; align-items: center; justify-content: space-between; padding: 0 12px 0 14px; white-space: nowrap; }
.marks-select { margin: 19px 0 0 8px; width: 174px; height: 24px; border: 1px solid #d9d9d9; border-bottom-width: 2px; display: flex; background: #fafafa; }
.marks-type { flex: 1; display: flex; align-items: center; gap: 8px; padding-left: 15px; font-size: 14.300px; color: #555; }
.marks-arrow { width: 22px; border-left: 1px solid #e2e2e2; display: flex; align-items: center; justify-content: center; }
.mark-grid { margin: 8px 0 0 8px; display: grid; grid-template-columns: repeat(3, 54px); grid-auto-rows: 53px; column-gap: 6.500px; row-gap: 7px; }
.mark-btn { border: 1px solid #d9d9d9; border-bottom-width: 2px; border-right-width: 2px; display: flex; flex-direction: column; align-items: center; justify-content: space-between; padding: 8px 2px 0 0; font-size: 14.500px; line-height: 17px; color: #333; }
.mark-pill-row { margin: 12px 0 0 16px; display: flex; align-items: center; gap: 5px; }
.pill-measure { width: 139px; height: 25px; border-radius: 13px; background: #00b180; color: #fff; font-size: 16.200px; line-height: 24px; text-align: center; }

/* canvas */
.canvas { flex: none; width: 1344px; margin-left: 7px; display: flex; flex-direction: column; gap: 8px; }
.shelf { height: 34px; background: #f9f9f9; border: 1px solid #d4d4d4; border-bottom-width: 2px; border-right-width: 2px; flex: none; }
.shelf + .shelf { height: 35px; }
.shelf-label { width: 156px; height: 100%; border-right: 1px solid #d9d9d9; display: flex; align-items: center; gap: 10px; padding: 1px 0 0 8px; font-size: 14.700px; color: #555; }
.view { height: 757px; flex: none; background: #fff; border: 1px solid #b5b5b5; border-width: 1px 2px 2px 1px; }
.view-title { margin: 0; padding-top: 16px; text-align: center; font-weight: 300; font-size: 27.300px; line-height: 32px; color: #555; }
.view-value { padding: 15px 0 0 74px; font-size: 15px; line-height: 18px; color: #555; }

/* tabs */
.tabs { height: 37px; flex: none; display: grid; grid-template-columns: 163px 69px 201px 72px 71px 71px 71px 70px 72px 71px 250px 250px 127px 242px 39px 40px 41px; background: #e6e6e6; border-bottom: 2px solid #d6d6d6; padding-top: 1px; }
.tab { display: flex; align-items: center; gap: 7px; padding-left: 8px; font-size: 15.500px; color: #666; border-right: 1px solid #cfcfcf; white-space: nowrap; }
.tab.src { padding-left: 12px; }
.tab.current { background: #fff; font-weight: 700; color: #555; font-size: 16px; }
.tab.icon-tab { padding-left: 11px; gap: 5px; font-size: 15.400px; }
.tab.add { padding-left: 10px; }

/* status */
.status { height: 25px; flex: none; display: flex; align-items: center; background: #ebebeb; font-size: 14.200px; color: #333; border-bottom: 1px solid #bdbdbd; padding-top: 1px; }
.st-a { margin-left: 3px; width: 63px; }
.st-b { width: 133px; letter-spacing: -.25px; }
.st-c { width: 1263px; }
.st-user { width: 158px; height: 100%; display: flex; align-items: center; border-left: 1px solid #d2d2d2; padding-left: 7px; gap: 9px; }
.st-user .dd { margin-left: 12px; }
.st-cell { height: 100%; border-left: 1px solid #d2d2d2; }
.st-nav { width: 88px; height: 100%; border-left: 1px solid #d2d2d2; display: flex; align-items: center; justify-content: space-between; padding: 0 11px 0 7px; }
.st-views { flex: 1; height: 100%; border-left: 1px solid #d2d2d2; display: flex; align-items: center; justify-content: space-around; padding: 0 3px 0 7px; }

/* taskbar */
.taskbar { height: 60px; flex: none; display: flex; align-items: center; background: linear-gradient(90deg, #e4edf8 0%, #dfe8f8 25%, #d3def6 50%, #d9e3f7 65%, #e3eef9 85%, #e4edf9 100%); font-family: "Open Sans", sans-serif; color: #222; }
.weather { width: 320px; display: flex; align-items: center; padding-left: 25px; gap: 7px; flex: none; }
.weather-text { display: flex; flex-direction: column; font-size: 14px; line-height: 20px; }
.sky { color: #555; }
.winlogo { margin-right: 18px; }
.task-search { width: 274px; height: 38px; border-radius: 19px; background: #f2f6fc; border: 1px solid #dfe6f2; border-bottom-color: #c6cfdf; display: flex; align-items: center; gap: 12px; padding-left: 14px; font-size: 16px; color: #555; flex: none; }
.apps { display: flex; align-items: flex-start; margin-left: 4px; height: 100%; flex: none; }
.app { width: 55px; height: 100%; display: flex; flex-direction: column; align-items: center; padding-top: 14px; position: relative; }
.app.first { width: 53px; }
.app.dot::after { content: ""; position: absolute; left: 50%; bottom: 6px; width: 8px; height: 4px; margin-left: -4px; border-radius: 2px; background: #7b8088; }
.app.active { padding-top: 5px; }
.app-tile-lg { width: 43px; height: 48px; border-radius: 5px; background: #edf3fb; box-shadow: 3px 0 0 -1px #e2eaf7; display: flex; align-items: center; justify-content: center; }
.bar { position: absolute; left: 50%; margin-left: -10px; bottom: 6px; width: 20px; height: 4px; border-radius: 2px; background: #0b7ad6; }
.tray { flex: 1; display: flex; align-items: center; margin-left: 15px; height: 100%; }
.tray-cell { height: 100%; display: flex; align-items: center; justify-content: center; flex: none; }
.tray-lang { width: 56px; text-align: center; font-size: 14px; line-height: 20px; flex: none; }
.clock { margin-left: auto; padding-right: 19px; text-align: right; font-size: 14.800px; line-height: 20px; }
```
